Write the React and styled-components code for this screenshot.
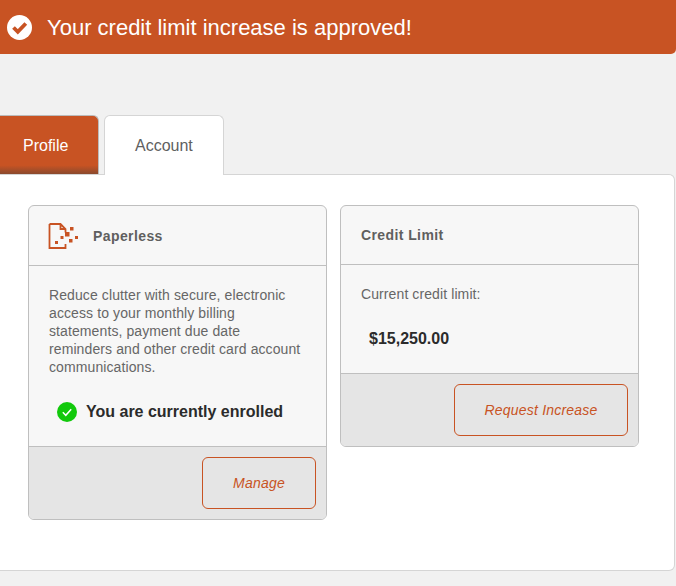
import React from 'react';
import styled, { createGlobalStyle } from 'styled-components';

const accent = '#c85323';

const GlobalStyle = createGlobalStyle`
  html, body {
    margin: 0;
    background: #f1f1f1;
    font-family: "Liberation Sans", Arial, sans-serif;
    overflow: hidden;
  }
  * {
    box-sizing: border-box;
  }
`;

const Page = styled.div`
  width: 676px;
  height: 586px;
`;

const Banner = styled.div`
  height: 54px;
  padding-left: 7px;
  display: flex;
  align-items: center;
  gap: 15px;
  background: ${accent};
  color: #fff;
  font-size: 22px;
  border-radius: 0 0 5px 0;
`;

const BannerText = styled.span`
  padding-top: 2px;
`;

const Tabs = styled.div`
  margin-top: 61px;
  height: 60px;
  display: flex;
  align-items: flex-start;
  gap: 5px;
`;

const ProfileTab = styled.div`
  width: 99px;
  height: 59px;
  padding: 21px 30px 0 23px;
  font-size: 16px;
  line-height: 18px;
  color: #fff;
  background: linear-gradient(to bottom, ${accent} 0, ${accent} 85%, #8a4a2e 100%);
  border-top: 1px solid #bbb;
  border-right: 1px solid #bbb;
  border-radius: 0 6px 0 0;
`;

const AccountTab = styled.div`
  position: relative;
  z-index: 1;
  width: 120px;
  height: 60px;
  padding: 21px 30px 0;
  font-size: 16px;
  line-height: 18px;
  color: #5f5f5f;
  background: #fff;
  border: 1px solid #d5d5d5;
  border-bottom: none;
  border-radius: 6px 6px 0 0;
`;

const Panel = styled.div`
  width: 675px;
  height: 397px;
  margin-top: -1px;
  padding: 30px 0 0 28px;
  display: flex;
  align-items: flex-start;
  gap: 13px;
  background: #fff;
  border: 1px solid #d5d5d5;
  border-left: none;
  border-radius: 0 6px 6px 0;
`;

const Card = styled.div`
  width: 299px;
  background: #f7f7f7;
  border: 1px solid #bfbfbf;
  border-radius: 6px;
  overflow: hidden;
`;

const CardHeader = styled.div`
  height: ${p => p.$height}px;
  padding-left: ${p => p.$inset}px;
  display: flex;
  align-items: center;
  gap: 13px;
  border-bottom: 1px solid #bfbfbf;
  color: #5f5f5f;
  font-size: 14px;
  font-weight: bold;
  letter-spacing: 0.4px;
`;

const CardBody = styled.div`
  height: ${p => p.$height}px;
  padding: 20px 23px 0 20px;
  color: #666;
  font-size: 14px;
  line-height: 18px;
  letter-spacing: 0.1px;
`;

const Enrolled = styled.div`
  margin: 26px 0 0 8px;
  display: flex;
  align-items: center;
  gap: 9px;
  color: #2b2b2b;
  font-size: 16px;
  font-weight: bold;
  letter-spacing: 0;
`;

const Amount = styled.div`
  margin: 27px 0 0 8px;
  color: #2b2b2b;
  font-size: 16px;
  font-weight: bold;
  letter-spacing: 0;
`;

const CardFooter = styled.div`
  padding: 10px 10px 10px 0;
  display: flex;
  justify-content: flex-end;
  background: #e5e5e5;
  border-top: 1px solid #bfbfbf;
`;

const ActionButton = styled.button`
  width: ${p => p.$width}px;
  height: 52px;
  padding: 0;
  font-family: inherit;
  font-size: 14px;
  font-style: italic;
  letter-spacing: 0.2px;
  color: ${accent};
  background: transparent;
  border: 1px solid ${accent};
  border-radius: 6px;
`;

const CheckBadge = () => (
  <svg width="25" height="25" viewBox="0 0 25 25">
    <circle cx="12.5" cy="12.5" r="12.5" fill="#fff" />
    <path d="M6.5 12.5l4.300 4.300L18.800 8.500" fill="none" stroke={accent} strokeWidth="3.800" />
  </svg>
);

const PaperlessIcon = () => (
  <svg width="32" height="27" viewBox="0 0 32 27">
    <path
      d="M1.500 2h11l5 5v3.500M17.500 22v4h-16V2M12.500 2v5h5"
      fill="none"
      stroke={accent}
      strokeWidth="1.800"
    />
    <g fill={accent}>
      <rect x="22" y="5" width="3.500" height="3.500" />
      <rect x="17" y="10" width="4.500" height="4.500" />
      <rect x="12.500" y="14" width="3" height="3" />
      <rect x="27" y="14" width="3" height="3" />
      <rect x="21" y="17" width="3.500" height="3.500" />
      <rect x="7" y="19" width="3" height="3" />
    </g>
  </svg>
);

const EnrolledIcon = () => (
  <svg width="20" height="20" viewBox="0 0 20 20">
    <circle cx="10" cy="10" r="10" fill="#12c90c" />
    <path d="M5.800 10.300l3 3 5.400-6" fill="none" stroke="#fff" strokeWidth="1.500" />
  </svg>
);

export default function App() {
  return (
    <Page>
      <GlobalStyle />
      <Banner>
        <CheckBadge />
        <BannerText>Your credit limit increase is approved!</BannerText>
      </Banner>
      <Tabs>
        <ProfileTab>Profile</ProfileTab>
        <AccountTab>Account</AccountTab>
      </Tabs>
      <Panel>
        <Card>
          <CardHeader $height={60} $inset={19}>
            <PaperlessIcon />
            <span>Paperless</span>
          </CardHeader>
          <CardBody $height={180}>
            Reduce clutter with secure, electronic access to your monthly billing
            statements, payment due date reminders and other credit card account
            communications.
            <Enrolled>
              <EnrolledIcon />
              You are currently enrolled
            </Enrolled>
          </CardBody>
          <CardFooter>
            <ActionButton $width={114}>Manage</ActionButton>
          </CardFooter>
        </Card>
        <Card>
          <CardHeader $height={59} $inset={20}>Credit Limit</CardHeader>
          <CardBody $height={108}>
            Current credit limit:
            <Amount>$15,250.00</Amount>
          </CardBody>
          <CardFooter>
            <ActionButton $width={174}>Request Increase</ActionButton>
          </CardFooter>
        </Card>
      </Panel>
    </Page>
  );
}
